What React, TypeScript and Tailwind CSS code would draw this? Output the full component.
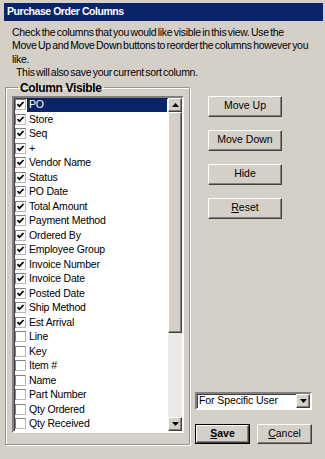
import React from "react";

const items: { label: string; checked: boolean }[] = [
  { label: "PO", checked: true },
  { label: "Store", checked: true },
  { label: "Seq", checked: true },
  { label: "+", checked: true },
  { label: "Vendor Name", checked: true },
  { label: "Status", checked: true },
  { label: "PO Date", checked: true },
  { label: "Total Amount", checked: true },
  { label: "Payment Method", checked: true },
  { label: "Ordered By", checked: true },
  { label: "Employee Group", checked: true },
  { label: "Invoice Number", checked: true },
  { label: "Invoice Date", checked: true },
  { label: "Posted Date", checked: true },
  { label: "Ship Method", checked: true },
  { label: "Est Arrival", checked: true },
  { label: "Line", checked: false },
  { label: "Key", checked: false },
  { label: "Item #", checked: false },
  { label: "Name", checked: false },
  { label: "Part Number", checked: false },
  { label: "Qty Ordered", checked: false },
  { label: "Qty Received", checked: false },
];

function Check({ checked }: { checked: boolean }) {
  return (
    <div className="ml-[1px] flex h-[11px] w-[11px] shrink-0 items-center justify-center border border-t-[#808080] border-l-[#808080] border-r-[#b8b8b8] border-b-[#b8b8b8] bg-white">
      {checked && (
        <svg width="9" height="9" viewBox="0 0 9 9">
          <polyline points="1.5,4.2 3.5,6.3 7.5,2" fill="none" stroke="#000" strokeWidth="1.8" />
        </svg>
      )}
    </div>
  );
}

function Arrow({ up }: { up: boolean }) {
  return (
    <svg width="7" height="4" viewBox="0 0 7 4">
      {up ? <polygon points="0,4 7,4 3.5,0" fill="#000" /> : <polygon points="0,0 7,0 3.5,4" fill="#000" />}
    </svg>
  );
}

const raised =
  "border border-t-white border-l-white border-r-[#404040] border-b-[#404040] shadow-[inset_-1px_-1px_0_#808080] bg-[#d4d0c8]";

function Btn({ children, className = "" }: { children: React.ReactNode; className?: string }) {
  return (
    <div className={`flex h-[21px] w-[74px] items-center justify-center text-[10.5px] text-black ${raised} ${className}`}>
      {children}
    </div>
  );
}

export default function App() {
  return (
    <div
      className="relative h-[459px] w-[325px] overflow-hidden bg-[#d4d0c8] text-black"
      style={{ fontFamily: '"Liberation Sans", Arial, sans-serif' }}
    >
      <div className="ml-[4px] mr-[2px] mt-[3px] flex h-[18px] items-center bg-[#0a246a] pl-[3px] text-[10.5px] font-bold tracking-[-0.45px] text-white">
        Purchase Order Columns
      </div>
      <div className="px-[12px] pt-[5px] text-[10.5px] leading-[13.4px] tracking-[-0.3px] [word-spacing:-1.2px]">
        <div className="whitespace-nowrap">Check the columns that you would like visible in this view. Use the</div>
        <div className="whitespace-nowrap">Move Up and Move Down buttons to reorder the columns however you</div>
        <div className="whitespace-nowrap">like.</div>
        <div className="whitespace-nowrap pl-[4px]">This will also save your current sort column.</div>
      </div>
      <div className="mt-[1px] flex">
        <fieldset className="ml-[5px] w-[185px] border border-[#9a968f] pb-[11px] pl-[6px] pr-[5px] shadow-[inset_1px_1px_0_#fff,1px_1px_0_#fff]">
          <legend className="ml-[6px] px-[2px] text-[12px] font-bold leading-[14px] tracking-[-0.35px]">Column Visible</legend>
          <div className="mt-[1px] flex h-[337px] w-[172px] overflow-hidden border-2 border-t-[#808080] border-l-[#808080] border-r-white border-b-white bg-white shadow-[inset_1px_1px_0_#404040]">
            <div className="flex-1 overflow-hidden">
              {items.map((it, i) => (
                <div key={it.label} className="flex h-[14.5px] items-center">
                  <Check checked={it.checked} />
                  <div
                    className={`ml-[1px] mr-[1px] flex h-full flex-1 items-center whitespace-nowrap pl-[2px] text-[10.5px] tracking-[-0.2px] ${
                      i === 0 ? "bg-[#0a246a] text-white" : ""
                    }`}
                  >
                    {it.label}
                  </div>
                </div>
              ))}
            </div>
            <div className="flex w-[14px] flex-col bg-[#ebe9e5]">
              <div className={`flex h-[14px] items-center justify-center ${raised}`}>
                <Arrow up />
              </div>
              <div className={`h-[221px] ${raised}`} />
              <div className="flex-1" />
              <div className={`flex h-[14px] items-center justify-center ${raised}`}>
                <Arrow up={false} />
              </div>
            </div>
          </div>
        </fieldset>
        <div className="flex flex-1 flex-col pb-[1px] pl-[5px] pt-[15px]">
          <div className="ml-[13px] flex flex-col gap-[13px]">
            <Btn>Move Up</Btn>
            <Btn>Move Down</Btn>
            <Btn>Hide</Btn>
            <Btn>
              <span>
                <span className="underline">R</span>eset
              </span>
            </Btn>
          </div>
          <div className="mt-auto flex flex-col">
            <div className="flex h-[18px] w-[117px] border-2 border-t-[#808080] border-l-[#808080] border-r-white border-b-white bg-white shadow-[inset_1px_1px_0_#404040]">
              <div className="flex flex-1 items-center whitespace-nowrap pl-[2px] text-[10.5px] tracking-[-0.1px]">For Specific User</div>
              <div className={`flex w-[14px] items-center justify-center ${raised}`}>
                <Arrow up={false} />
              </div>
            </div>
            <div className="mt-[14px] flex gap-[7px]">
              <div className="h-[20px] w-[55px] border border-black">
                <div className={`flex h-full w-full items-center justify-center text-[10.5px] font-bold ${raised}`}>
                  <span>
                    <span className="underline">S</span>ave
                  </span>
                </div>
              </div>
              <div className={`flex h-[20px] w-[55px] items-center justify-center text-[10.5px] ${raised}`}>
                <span>
                  <span className="underline">C</span>ancel
                </span>
              </div>
            </div>
          </div>
        </div>
      </div>
    </div>
  );
}
